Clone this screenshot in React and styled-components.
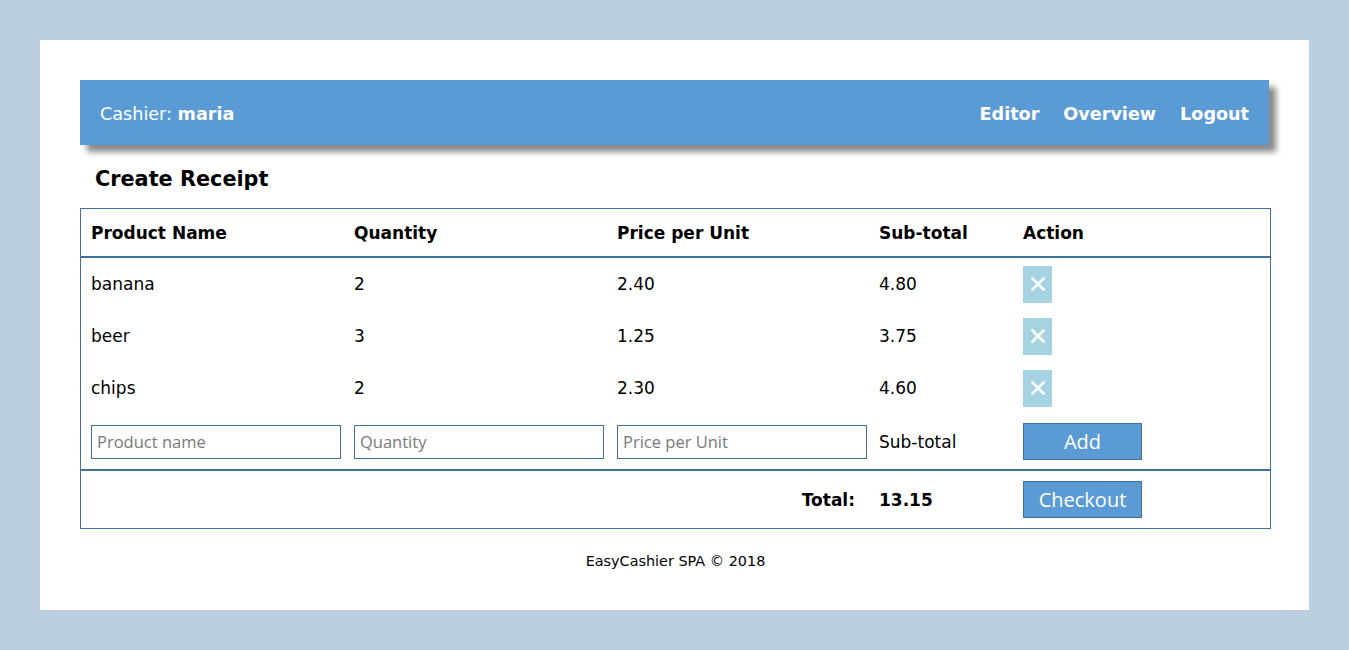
import React from "react";
import styled, { createGlobalStyle } from "styled-components";

const GlobalStyle = createGlobalStyle`
  html, body { margin: 0; padding: 0; }
  body {
    background: #bccfe0;
    font-family: "DejaVu Sans", Verdana, sans-serif;
    color: #000;
  }
`;

const Page = styled.div`
  padding: 40px;
`;

const Sheet = styled.div`
  background: #fff;
  padding: 40px 38px 40px 40px;
  height: 570px;
  box-sizing: border-box;
`;

const TopBar = styled.header`
  width: 1189px;
  height: 65px;
  background: #5b9bd5;
  box-shadow: 7px 7px 6px #8a8a8a;
  display: flex;
  align-items: center;
  justify-content: space-between;
  padding: 2px 20px 0;
  box-sizing: border-box;
  color: #fff;
  font-size: 17.6px;
`;

const Cashier = styled.div`
  b { font-weight: bold; }
`;

const Nav = styled.nav`
  display: flex;
  gap: 24px;
`;

const NavLink = styled.a`
  color: #fff;
  font-weight: bold;
  text-decoration: none;
  font-size: 17.6px;
`;

const Title = styled.h2`
  margin: 0;
  padding: 22px 0 0 15px;
  height: 63px;
  box-sizing: border-box;
  font-size: 20.8px;
  font-weight: bold;
`;

const Table = styled.table`
  width: 1191px;
  border-collapse: collapse;
  border: 1px solid #41719c;
  font-size: 17px;
`;

const HeadCell = styled.th`
  text-align: left;
  font-weight: bold;
  padding: 0 0 0 10px;
  height: 47px;
  width: ${(p) => p.$w || "auto"};
  border-bottom: 2px solid #41719c;
`;

const Row = styled.tr`
  height: ${(p) => p.$h || 52}px;
  border-top: ${(p) => (p.$sep ? "2px solid #41719c" : "none")};
`;

const Cell = styled.td`
  padding: ${(p) => p.$pt || 0}px 0 0 10px;
  text-align: ${(p) => (p.$right ? "right" : "left")};
  padding-right: ${(p) => (p.$right ? "14px" : "0")};
  font-weight: ${(p) => (p.$bold ? "bold" : "normal")};
  vertical-align: middle;
`;

const DeleteBtn = styled.button`
  width: 29px;
  height: 37px;
  border: none;
  background: #a6d3e2;
  padding: 0;
  display: flex;
  align-items: center;
  justify-content: center;
  cursor: pointer;
`;

const Input = styled.input`
  width: 250px;
  height: 34px;
  box-sizing: border-box;
  border: 1px solid #41719c;
  padding: 0 5px;
  font-family: "Open Sans", "Noto Sans", sans-serif;
  font-size: 16.5px;
  color: #333;
  outline: none;
  &::placeholder { color: #7a7a7a; }
`;

const ActionBtn = styled.button`
  width: 119px;
  height: 37px;
  box-sizing: border-box;
  background: #5b9bd5;
  border: 1px solid #41719c;
  color: #fff;
  font-family: "Open Sans", "Noto Sans", sans-serif;
  font-size: 20px;
  padding: 0;
  cursor: pointer;
`;

const Footer = styled.footer`
  text-align: center;
  font-size: 14.4px;
  padding-top: 24px;
`;

const CloseIcon = () => (
  <svg width="16" height="16" viewBox="0 0 16 16">
    <path d="M2.5 2.5 L13.5 13.5 M13.5 2.5 L2.5 13.5" stroke="#fff" strokeWidth="2.6" strokeLinecap="square" />
  </svg>
);

const items = [
  { name: "banana", qty: 2, price: "2.40", sub: "4.80" },
  { name: "beer", qty: 3, price: "1.25", sub: "3.75" },
  { name: "chips", qty: 2, price: "2.30", sub: "4.60" },
];

export default function App() {
  return (
    <>
      <GlobalStyle />
      <Page>
        <Sheet>
          <TopBar>
            <Cashier>
              Cashier: <b>maria</b>
            </Cashier>
            <Nav>
              <NavLink>Editor</NavLink>
              <NavLink>Overview</NavLink>
              <NavLink>Logout</NavLink>
            </Nav>
          </TopBar>
          <Title>Create Receipt</Title>
          <Table>
            <thead>
              <tr>
                <HeadCell $w="253px">Product Name</HeadCell>
                <HeadCell $w="253px">Quantity</HeadCell>
                <HeadCell $w="252px">Price per Unit</HeadCell>
                <HeadCell $w="134px">Sub-total</HeadCell>
                <HeadCell>Action</HeadCell>
              </tr>
            </thead>
            <tbody>
              {items.map((it, i) => (
                <Row key={it.name} $h={i === 0 ? 53 : 52}>
                  <Cell>{it.name}</Cell>
                  <Cell>{it.qty}</Cell>
                  <Cell>{it.price}</Cell>
                  <Cell>{it.sub}</Cell>
                  <Cell>
                    <DeleteBtn aria-label="remove">
                      <CloseIcon />
                    </DeleteBtn>
                  </Cell>
                </Row>
              ))}
              <Row $h={56}>
                <Cell><Input placeholder="Product name" /></Cell>
                <Cell><Input placeholder="Quantity" /></Cell>
                <Cell><Input placeholder="Price per Unit" /></Cell>
                <Cell>Sub-total</Cell>
                <Cell><ActionBtn>Add</ActionBtn></Cell>
              </Row>
              <Row $h={58} $sep>
                <Cell colSpan={3} $right $bold $pt={2}>Total:</Cell>
                <Cell $bold $pt={2}>13.15</Cell>
                <Cell><ActionBtn>Checkout</ActionBtn></Cell>
              </Row>
            </tbody>
          </Table>
          <Footer>EasyCashier SPA © 2018</Footer>
        </Sheet>
      </Page>
    </>
  );
}
